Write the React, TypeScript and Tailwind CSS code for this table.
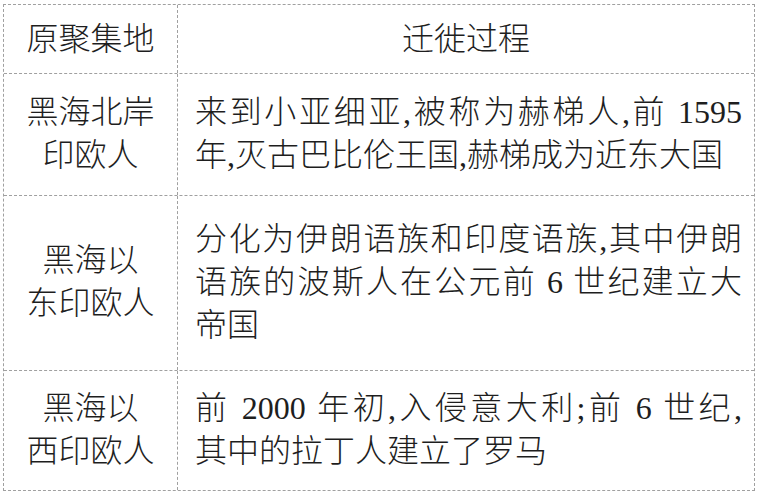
const font = {
  fontFamily: '"Liberation Serif", "Noto Sans CJK SC", serif',
};

// each line is its own block so breaks match the print; full lines are justified
function Lines({ lines }: { lines: string[] }) {
  return (
    <>
      {lines.map((l, i) =>
        i < lines.length - 1 ? (
          <div key={i} className="text-justify [text-align-last:justify]">
            {l}
          </div>
        ) : (
          <div key={i} className="text-left">
            {l}
          </div>
        )
      )}
    </>
  );
}

const rows = [
  {
    place: ["黑海北岸", "印欧人"],
    text: ["来到小亚细亚,被称为赫梯人,前 1595", "年,灭古巴比伦王国,赫梯成为近东大国"],
    h: "h-[122px]",
  },
  {
    place: ["黑海以", "东印欧人"],
    text: [
      "分化为伊朗语族和印度语族,其中伊朗",
      "语族的波斯人在公元前 6 世纪建立大",
      "帝国",
    ],
    h: "h-[175px]",
  },
  {
    place: ["黑海以", "西印欧人"],
    text: ["前 2000 年初,入侵意大利;前 6 世纪,", "其中的拉丁人建立了罗马"],
    h: "h-[119px]",
  },
];

export default function App() {
  return (
    <div className="w-[758px] h-[495px] bg-white pl-[3px] pt-[4px]" style={font}>
      <div className="w-[752px] border border-dashed border-[#a0a0a0] text-[32px] leading-[43px] font-light text-[#1e1e1e]">
        {/* header */}
        <div className="flex h-[69px] border-b border-dashed border-[#a0a0a0]">
          <div className="w-[174px] border-r border-dashed border-[#a0a0a0] flex items-center justify-center">
            原聚集地
          </div>
          <div className="w-[576px] flex items-center justify-center">迁徙过程</div>
        </div>

        {rows.map((r, i) => (
          <div
            key={i}
            className={`flex ${r.h} ${i < rows.length - 1 ? "border-b border-dashed border-[#a0a0a0]" : ""}`}
          >
            <div className="w-[174px] border-r border-dashed border-[#a0a0a0] flex flex-col justify-center text-center pb-[2px]">
              {r.place.map((p, j) => (
                <div key={j}>{p}</div>
              ))}
            </div>
            <div className="w-[576px] flex flex-col justify-center pl-[17px] pr-[12px] pb-[2px]">
              <Lines lines={r.text} />
            </div>
          </div>
        ))}
      </div>
    </div>
  );
}
